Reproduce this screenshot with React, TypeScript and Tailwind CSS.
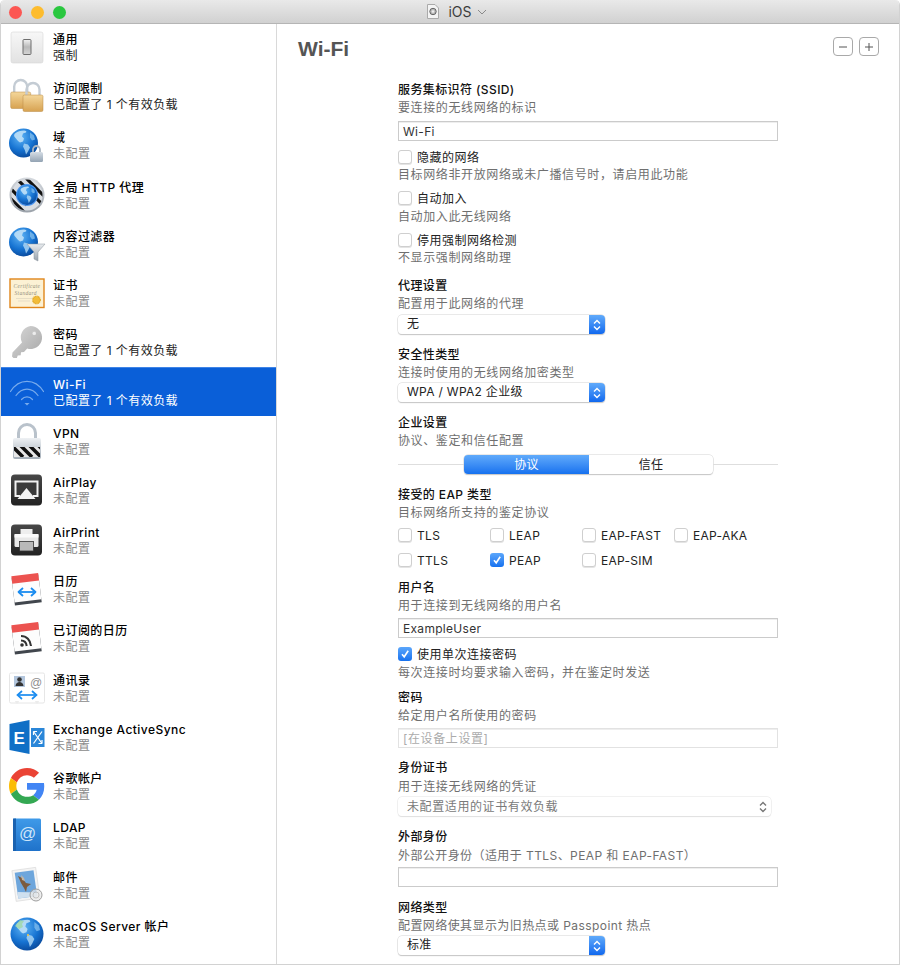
import type { ReactNode } from "react";

function IconBox({ children }: { children: ReactNode }) {
	return (
		<svg width="36" height="36" viewBox="0 0 36 36" className="shrink-0 overflow-visible">
			{children}
		</svg>
	);
}

function GlobeBody({ id, cx, cy, r }: { id: string; cx: number; cy: number; r: number }) {
	const s = r / 14.5;
	return (
		<g transform={`translate(${cx - 14.5 * s} ${cy - 14.5 * s}) scale(${s})`}>
			<defs>
				<radialGradient id={id} cx="0.4" cy="0.3" r="0.8">
					<stop offset="0" stopColor="#5fb4f5" />
					<stop offset="0.55" stopColor="#1673d2" />
					<stop offset="1" stopColor="#063f8e" />
				</radialGradient>
			</defs>
			<circle cx="14.5" cy="14.5" r="14.5" fill={`url(#${id})`} />
			<path
				d="M6 5c2-2 6-3 9-3 2 0 3 1 2 2l-3 1-1 3 2 2-1 3-3 1c-2-1-3-3-4-4S4 7 6 5z"
				fill="#bfe0f7"
				opacity="0.9"
			/>
			<path d="M15 15l4 1 2 3-2 4-2 3-1-4-2-4z" fill="#a8d4f3" opacity="0.85" />
			<path d="M21 4l4 3 1 4-3 1-2-3z" fill="#8cc4ef" opacity="0.7" />
		</g>
	);
}

function GeneralIcon() {
	return (
		<IconBox>
			<defs>
				<linearGradient id="gen" x1="0" y1="0" x2="0" y2="1">
					<stop offset="0" stopColor="#f7f7f7" />
					<stop offset="1" stopColor="#e2e2e2" />
				</linearGradient>
				<linearGradient id="gens" x1="0" y1="0" x2="0" y2="1">
					<stop offset="0" stopColor="#f2f2f2" />
					<stop offset="0.5" stopColor="#b9b9b9" />
					<stop offset="1" stopColor="#d5d5d5" />
				</linearGradient>
			</defs>
			<rect x="2" y="3" width="32" height="31" rx="2" fill="url(#gen)" stroke="#d6d6d6" strokeWidth="0.6" />
			<rect x="14" y="10.5" width="8" height="15" rx="1" fill="url(#gens)" stroke="#6e6e6e" strokeWidth="1" />
		</IconBox>
	);
}

function Padlock({ x, y, id }: { x: number; y: number; id: string }) {
	return (
		<g transform={`translate(${x} ${y})`}>
			<defs>
				<linearGradient id={id} x1="0" y1="0" x2="0" y2="1">
					<stop offset="0" stopColor="#f4d79b" />
					<stop offset="1" stopColor="#d7a251" />
				</linearGradient>
			</defs>
			<path d="M3.500 15V8a6.500 6.500 0 0113 0v7" fill="none" stroke="#c4ccd4" strokeWidth="2.400" />
			<rect x="0" y="13.500" width="20" height="16.500" rx="1.500" fill={`url(#${id})`} stroke="#b88a45" strokeWidth="0.5" />
		</g>
	);
}

function RestrictionIcon() {
	return (
		<IconBox>
			<Padlock x={1.7} y={0.5} id="lock1" />
			<Padlock x={14} y={3.5} id="lock2" />
		</IconBox>
	);
}

function DomainIcon() {
	return (
		<IconBox>
			<GlobeBody id="gl1" cx={14.5} cy={16} r={14.5} />
			<defs>
				<linearGradient id="sl" x1="0" y1="0" x2="0" y2="1">
					<stop offset="0" stopColor="#d5dde5" />
					<stop offset="1" stopColor="#93a3b3" />
				</linearGradient>
			</defs>
			<path d="M24 26v-3.500a3.500 3.500 0 017 0V26" fill="none" stroke="#aab6c2" strokeWidth="1.800" />
			<rect x="21" y="25" width="13" height="10" rx="1.500" fill="url(#sl)" />
		</IconBox>
	);
}

function ProxyIcon() {
	return (
		<IconBox>
			<defs>
				<linearGradient id="pr" x1="0" y1="0" x2="0" y2="1">
					<stop offset="0" stopColor="#d5d9de" />
					<stop offset="1" stopColor="#9aa1a9" />
				</linearGradient>
				<clipPath id="prc">
					<circle cx="18" cy="18" r="15.500" />
				</clipPath>
			</defs>
			<circle cx="18" cy="18" r="17.500" fill="url(#pr)" />
			<circle cx="18" cy="18" r="15.500" fill="#d9dde2" />
			<g clipPath="url(#prc)" stroke="#111" strokeWidth="3.200">
				<path d="M-2 8L18 28" />
				<path d="M-4 16L16 36" />
				<path d="M4 -2L38 32" />
				<path d="M12 -4L42 26" />
			</g>
			<circle cx="18" cy="18" r="11" fill="#4b95f0" />
			<GlobeBody id="gl2" cx={18} cy={18} r={10} />
		</IconBox>
	);
}

function FilterIcon() {
	return (
		<IconBox>
			<GlobeBody id="gl3" cx={14.5} cy={16} r={14.5} />
			<defs>
				<linearGradient id="fn" x1="0" y1="0" x2="0" y2="1">
					<stop offset="0" stopColor="#e8ebee" />
					<stop offset="1" stopColor="#98a2ac" />
				</linearGradient>
			</defs>
			<path d="M18 18h18l-7 8v9l-4-2v-7z" fill="url(#fn)" stroke="#8b949c" strokeWidth="0.5" />
		</IconBox>
	);
}

function CertIcon() {
	return (
		<IconBox>
			<rect x="1" y="4" width="34" height="28.500" fill="#fcf1d4" stroke="#e0861a" strokeWidth="1.400" />
			<text x="4.500" y="13" fontSize="5.500" fontStyle="italic" fontFamily="'Liberation Serif', serif" fill="#97917e">
				Certificate
			</text>
			<text x="5.500" y="19.500" fontSize="5.500" fontStyle="italic" fontFamily="'Liberation Serif', serif" fill="#97917e">
				Standard
			</text>
			<path d="M7 23.500h16M9 26h12" stroke="#d9d2bc" strokeWidth="0.6" />
			<circle cx="27.500" cy="25" r="3.800" fill="#f2bc38" stroke="#e0a420" strokeWidth="1.200" strokeDasharray="1 0.6" />
		</IconBox>
	);
}

function KeyIcon() {
	return (
		<IconBox>
			<defs>
				<linearGradient id="ky" x1="0" y1="0" x2="1" y2="1">
					<stop offset="0" stopColor="#d9d9d9" />
					<stop offset="1" stopColor="#a6a6a6" />
				</linearGradient>
			</defs>
			<path
				d="M21.500 2a11.500 11.500 0 11-3.300 22.500L15 28l-3 .2-.3 3-3 .3-.8 2.500H4.500L3 32.500l.5-4L13 18.500A11.500 11.500 0 0121.500 2z"
				fill="url(#ky)"
			/>
			<circle cx="25" cy="9" r="2.200" fill="#c9c9c9" />
			<circle cx="25.300" cy="9.400" r="1.700" fill="#ededed" />
		</IconBox>
	);
}

function WifiIcon() {
	return (
		<IconBox>
			<g fill="none" stroke="#78abec" strokeWidth="1.200" strokeLinecap="round">
				<path d="M1.500 17.500C10 4 26 4 34.500 17.500" />
				<path d="M7 21.500C13 13 23 13 29 21.500" />
				<path d="M12.500 25.500C15.500 22 20.500 22 23.500 25.500" />
			</g>
			<path d="M15.500 29h5L18 31.500z" fill="#78abec" />
		</IconBox>
	);
}

function VpnIcon() {
	return (
		<IconBox>
			<defs>
				<linearGradient id="vp" x1="0" y1="0" x2="0" y2="1">
					<stop offset="0" stopColor="#eef1f4" />
					<stop offset="1" stopColor="#a3adb7" />
				</linearGradient>
				<clipPath id="vpc">
					<rect x="5" y="24" width="26" height="10" />
				</clipPath>
			</defs>
			<path d="M9.500 16V10a8.500 8.500 0 0117 0v6" fill="none" stroke="#b9c2cb" strokeWidth="3" />
			<rect x="4" y="15" width="28" height="21" rx="2" fill="url(#vp)" />
			<rect x="5" y="24" width="26" height="10" fill="#e8e8e8" />
			<g clipPath="url(#vpc)" stroke="#111" strokeWidth="3.500">
				<path d="M2 22l12 12" />
				<path d="M11 22l12 12" />
				<path d="M20 22l12 12" />
				<path d="M29 22l12 12" />
			</g>
		</IconBox>
	);
}

function DarkTile({ id, children }: { id: string; children: ReactNode }) {
	return (
		<IconBox>
			<defs>
				<linearGradient id={id} x1="0" y1="0" x2="0" y2="1">
					<stop offset="0" stopColor="#474747" />
					<stop offset="1" stopColor="#222" />
				</linearGradient>
			</defs>
			<rect x="2" y="2.500" width="31" height="31" rx="4" fill={`url(#${id})`} />
			{children}
		</IconBox>
	);
}

function AirPlayIcon() {
	return (
		<DarkTile id="apl">
			<path d="M11 24H6.500V9.500h22V24H24" fill="#3a3a3a" stroke="#f2f2f2" strokeWidth="2" />
			<path d="M17.500 16l9 11h-18z" fill="#f2f2f2" />
		</DarkTile>
	);
}

function AirPrintIcon() {
	return (
		<DarkTile id="apr">
			<rect x="11.500" y="7" width="12" height="6" fill="#eee" />
			<rect x="5.500" y="12" width="24" height="13" rx="1.500" fill="#e8e8e8" />
			<rect x="5.500" y="12" width="24" height="3.500" fill="#fafafa" />
			<rect x="10.500" y="19.500" width="14" height="9.500" fill="#b9b9b9" stroke="#333" strokeWidth="0.8" />
		</DarkTile>
	);
}

function CalendarBase({ children }: { children: ReactNode }) {
	return (
		<IconBox>
			<g transform="rotate(-7 18 18)">
				<rect x="4" y="5" width="27" height="28" fill="#41464d" />
				<rect x="4" y="4" width="27" height="26" fill="#fdfdfd" />
				<rect x="4" y="3.500" width="27" height="7.500" fill="#ec5350" />
			</g>
			{children}
		</IconBox>
	);
}

function CalendarIcon() {
	return (
		<CalendarBase>
			<g fill="none" stroke="#1a8cf0" strokeWidth="1.800" strokeLinejoin="round">
				<path d="M10 21h16" />
				<path d="M14 17l-4.500 4 4.500 4" />
				<path d="M22 17l4.500 4-4.500 4" />
			</g>
		</CalendarBase>
	);
}

function SubscribedIcon() {
	return (
		<CalendarBase>
			<g fill="none" stroke="#333" strokeWidth="2.100">
				<path d="M12 16c5.500 0 9.500 4 10 10" />
				<path d="M12 20.500c3 0 5.300 2.200 5.700 5.500" />
			</g>
			<circle cx="13" cy="25" r="1.800" fill="#333" />
		</CalendarBase>
	);
}

function ContactsIcon() {
	return (
		<IconBox>
			<rect x="0.500" y="3" width="35" height="30" rx="1.500" fill="#fff" stroke="#e6e6e6" />
			<rect x="5" y="6" width="11" height="11" fill="#b3c6dd" />
			<circle cx="10.500" cy="9.500" r="2.300" fill="#333" />
			<path d="M6.500 16c.5-3 2-4 4-4s3.500 1 4 4z" fill="#333" />
			<text x="21" y="16.500" fontSize="12" fontFamily="'Liberation Sans', sans-serif" fill="#8f8f8f">
				@
			</text>
			<g fill="none" stroke="#1a8cf0" strokeWidth="1.700">
				<path d="M9 25h18" />
				<path d="M13 21l-4.500 4 4.500 4" />
				<path d="M23 21l4.500 4-4.500 4" />
			</g>
			<path d="M6 31h4l-1 2.500H7zM26 31h4l-1 2.500h-2z" fill="#ececec" />
		</IconBox>
	);
}

function ExchangeIcon() {
	return (
		<IconBox>
			<path d="M0.500 5L20.500 1v34l-20-4z" fill="#0f6fc6" />
			<rect x="22" y="9" width="13.500" height="19" fill="#2a86d8" />
			<text x="4.500" y="24.500" fontSize="17" fontWeight="700" fontFamily="'Liberation Sans', sans-serif" fill="#fff">
				E
			</text>
			<g fill="none" stroke="#fff" strokeWidth="1.200">
				<path d="M24.500 12.500l8.500 12" />
				<path d="M33 12.500l-8.500 12" />
				<path d="M24.500 12.500h3.500M24.500 12.500V16M33 24.500h-3.500M33 24.500V21" />
			</g>
		</IconBox>
	);
}

function GoogleIcon() {
	return (
		<svg width="36" height="36" viewBox="0 0 48 48" className="shrink-0">
			<path fill="#EA4335" d="M24 9.500c3.540 0 6.710 1.220 9.210 3.600l6.850-6.850C35.900 2.380 30.470 0 24 0 14.620 0 6.510 5.380 2.560 13.220l7.980 6.190C12.430 13.720 17.740 9.500 24 9.500z" />
			<path fill="#4285F4" d="M46.980 24.550c0-1.570-.15-3.090-.38-4.550H24v9.020h12.940c-.58 2.960-2.260 5.480-4.780 7.180l7.730 6c4.510-4.180 7.090-10.360 7.090-17.650z" />
			<path fill="#FBBC05" d="M10.530 28.590c-.48-1.450-.76-2.990-.76-4.590s.27-3.140.76-4.590l-7.980-6.190C.92 16.460 0 20.120 0 24c0 3.880.92 7.540 2.560 10.780l7.970-6.190z" />
			<path fill="#34A853" d="M24 48c6.480 0 11.930-2.130 15.890-5.810l-7.730-6c-2.150 1.450-4.920 2.300-8.160 2.300-6.260 0-11.570-4.220-13.470-9.910l-7.980 6.190C6.510 42.620 14.620 48 24 48z" />
		</svg>
	);
}

function LdapIcon() {
	return (
		<IconBox>
			<defs>
				<linearGradient id="ld" x1="0" y1="0" x2="0" y2="1">
					<stop offset="0" stopColor="#3f9ae9" />
					<stop offset="1" stopColor="#1f72ca" />
				</linearGradient>
			</defs>
			<rect x="4" y="1.500" width="28" height="32.500" rx="1.500" fill="url(#ld)" />
			<rect x="4" y="1.500" width="3" height="32.500" fill="#1a62b0" />
			<text x="10" y="22" fontSize="17" fontFamily="'Liberation Sans', sans-serif" fill="#cfe6fa">
				@
			</text>
		</IconBox>
	);
}

function MailIcon() {
	return (
		<IconBox>
			<g transform="rotate(-8 16 18)">
				<rect x="5" y="2" width="24" height="31" fill="#f4f4f4" stroke="#cfcfcf" strokeWidth="0.5" />
				<rect x="7.500" y="4.500" width="19" height="26" fill="#6ea6dc" />
				<path d="M7.500 24l19 3v3.500h-19z" fill="#cfe0ef" />
			</g>
			<path d="M9 9l4 2 4 5 5 1-4 3-1 5-2-4-3-5z" fill="#7c5a3c" />
			<path d="M12 8l3 3 1 3-3-1z" fill="#c5b5a2" />
			<circle cx="27" cy="28" r="6" fill="#e8e8e8" fillOpacity="0.7" stroke="#9e9e9e" strokeWidth="1" />
			<circle cx="27" cy="28" r="3" fill="none" stroke="#a8a8a8" strokeWidth="0.6" />
		</IconBox>
	);
}

function ServerGlobeIcon() {
	return (
		<IconBox>
			<GlobeBody id="gl4" cx={18} cy={18} r={16.500} />
			<path d="M6 10l5-6 4 1-2 3 1 3-4 2z" fill="#9fd8a8" opacity="0.8" />
			<circle cx="19" cy="19" r="1" fill="#f5c33b" />
		</IconBox>
	);
}

const sidebarItems = [
	{ name: "通用", status: "强制", on: true, icon: <GeneralIcon /> },
	{ name: "访问限制", status: "已配置了 1 个有效负载", on: true, icon: <RestrictionIcon /> },
	{ name: "域", status: "未配置", icon: <DomainIcon /> },
	{ name: "全局 HTTP 代理", status: "未配置", icon: <ProxyIcon /> },
	{ name: "内容过滤器", status: "未配置", icon: <FilterIcon /> },
	{ name: "证书", status: "未配置", icon: <CertIcon /> },
	{ name: "密码", status: "已配置了 1 个有效负载", on: true, icon: <KeyIcon /> },
	{ name: "Wi-Fi", status: "已配置了 1 个有效负载", selected: true, icon: <WifiIcon /> },
	{ name: "VPN", status: "未配置", icon: <VpnIcon /> },
	{ name: "AirPlay", status: "未配置", icon: <AirPlayIcon /> },
	{ name: "AirPrint", status: "未配置", icon: <AirPrintIcon /> },
	{ name: "日历", status: "未配置", icon: <CalendarIcon /> },
	{ name: "已订阅的日历", status: "未配置", icon: <SubscribedIcon /> },
	{ name: "通讯录", status: "未配置", icon: <ContactsIcon /> },
	{ name: "Exchange ActiveSync", status: "未配置", icon: <ExchangeIcon /> },
	{ name: "谷歌帐户", status: "未配置", icon: <GoogleIcon /> },
	{ name: "LDAP", status: "未配置", icon: <LdapIcon /> },
	{ name: "邮件", status: "未配置", icon: <MailIcon /> },
	{ name: "macOS Server 帐户", status: "未配置", icon: <ServerGlobeIcon /> },
];

function SidebarRow({ item }: { item: (typeof sidebarItems)[number] }) {
	const statusColor = item.selected ? "text-white" : item.on ? "text-[#222]" : "text-[#8a8a8a]";
	return (
		<div
			className={
				"flex h-[49.3px] shrink-0 items-center gap-2 pl-2 " +
				(item.selected ? "bg-[#0a5fd8] border-t border-[#3f84e6]" : "")
			}
		>
			{item.icon}
			<div className="pt-[2px] leading-[16px] tracking-[0.45px]">
				<div className={"font-medium " + (item.selected ? "text-white" : "text-black")}>{item.name}</div>
				<div className={statusColor}>{item.status}</div>
			</div>
		</div>
	);
}

function Label({ children, className = "" }: { children: ReactNode; className?: string }) {
	return <div className={"h-[18px] leading-[20px] font-medium tracking-[0.4px] text-[#111] " + className}>{children}</div>;
}

function Desc({ children, className = "" }: { children: ReactNode; className?: string }) {
	return <div className={"h-[18px] leading-[20px] text-[#6f6f6f] " + (className || "tracking-[0.62px]")}>{children}</div>;
}

function TextBox({ value, className = "", disabled }: { value?: string; className?: string; disabled?: boolean }) {
	return (
		<div
			className={
				"h-5 border px-1 leading-[19px] shadow-[inset_0_1px_0_#eee] " +
				(disabled ? "border-[#e2e2e2] text-[#ababab] tracking-[0.6px] " : "border-[#cbcbcb] text-[#333] ") +
				className
			}
		>
			{value}
		</div>
	);
}

function Stepper({ dim }: { dim?: boolean }) {
	return (
		<svg width="10" height="14" viewBox="0 0 10 14" fill="none" stroke={dim ? "#777" : "#fff"} strokeWidth="1.400">
			<path d="M2 5.500L5 2.500l3 3" />
			<path d="M2 8.500l3 3 3-3" />
		</svg>
	);
}

function Select({ value, className = "" }: { value: string; className?: string }) {
	return (
		<div className={"flex h-[19px] w-[207px] overflow-hidden rounded-[4px] bg-white shadow-[0_0_0_0.5px_#d4d4d4,0_1px_1px_#bbb] " + className}>
			<div className="flex-1 pl-[9px] leading-[18px] text-[#222]">{value}</div>
			<div className="flex w-4 items-center justify-center bg-gradient-to-b from-[#60aafa] to-[#0f68ee]">
				<Stepper />
			</div>
		</div>
	);
}

function CheckMark({ checked }: { checked?: boolean }) {
	if (checked) {
		return (
			<span className="flex h-[14px] w-[14px] shrink-0 items-center justify-center rounded-[3px] bg-gradient-to-b from-[#5aa6fb] to-[#1571ef]">
				<svg width="10" height="10" viewBox="0 0 10 10" fill="none" stroke="#fff" strokeWidth="1.600">
					<path d="M2 5.200l2.200 2.600L8.200 1.800" />
				</svg>
			</span>
		);
	}
	return <span className="h-[14px] w-[14px] shrink-0 rounded-[3px] border border-[#cfcfcf] bg-white shadow-[0_1px_0_#e4e4e4]" />;
}

function CheckRow({ label, checked, className = "" }: { label: string; checked?: boolean; className?: string }) {
	return (
		<div className={"flex h-[18px] items-center gap-[5px] leading-[18px] text-[#222] " + className}>
			<CheckMark checked={checked} />
			<span className="mt-[2px]">{label}</span>
		</div>
	);
}

const eapRows = [
	[{ l: "TLS" }, { l: "LEAP" }, { l: "EAP-FAST" }, { l: "EAP-AKA" }],
	[{ l: "TTLS" }, { l: "PEAP", c: true }, { l: "EAP-SIM" }],
];

export default function App() {
	return (
		<div className="flex h-[965px] w-[900px] flex-col overflow-hidden rounded-t-[5px] border-x border-b border-[#d2d2d2] bg-white font-['Inter','Noto_Sans_CJK_SC',sans-serif] text-[12px] tracking-[0.3px]">
			{/* title bar */}
			<div className="relative z-10 flex h-6 shrink-0 items-center justify-center border-b border-[#b5b5b5] bg-gradient-to-b from-[#e9e9e9] to-[#d1d1d1]">
				<div className="absolute left-[8px] top-[6px] flex gap-[9px]">
					<span className="h-[13px] w-[13px] rounded-full bg-[#fc5753]" />
					<span className="h-[13px] w-[13px] rounded-full bg-[#fdbc2e]" />
					<span className="h-[13px] w-[13px] rounded-full bg-[#2ac73f]" />
				</div>
				<div className="flex items-center gap-[5px] pl-[14px] text-[14px] tracking-normal text-[#3c3c3c]">
					<svg width="12" height="15" viewBox="0 0 12 15" className="mr-[4px]">
						<path d="M0.500 0.500H8l3.500 3.500v10.500H.5z" fill="#f4f4f4" stroke="#aaa" />
						<circle cx="6" cy="7.500" r="3.200" fill="#bbb" stroke="#666" />
						<circle cx="6" cy="7.500" r="1.200" fill="#eee" />
					</svg>
					iOS
					<svg width="10" height="6" viewBox="0 0 10 6" fill="none" stroke="#8a8a8a" strokeWidth="1">
						<path d="M1 1l4 4 4-4" />
					</svg>
				</div>
			</div>

			<div className="flex min-h-0 flex-1">
				<aside className="h-full w-[276px] shrink-0 overflow-hidden border-r border-[#d9d9d9]">
					<div className="-mt-[2px] flex flex-col">
						{sidebarItems.map((item) => (
							<SidebarRow key={item.name} item={item} />
						))}
					</div>
				</aside>

				<main className="min-w-0 flex-1 overflow-hidden">
					<div className="flex items-start justify-between pl-[21px] pr-[20px] pt-[10px]">
						<h1 className="font-['Liberation_Sans',sans-serif] text-[21px] leading-[30px] font-bold tracking-normal text-[#555]">Wi-Fi</h1>
						<div className="flex gap-[6px] pt-[3px]">
							<button className="flex h-[19px] w-5 items-center justify-center rounded-[4px] border border-[#a9a9a9] bg-white">
								<svg width="10" height="10" viewBox="0 0 10 10" stroke="#555" strokeWidth="1"><path d="M1 5h8" /></svg>
							</button>
							<button className="flex h-[19px] w-5 items-center justify-center rounded-[4px] border border-[#a9a9a9] bg-white">
								<svg width="10" height="10" viewBox="0 0 10 10" stroke="#555" strokeWidth="1"><path d="M1 5h8M5 1v8" /></svg>
							</button>
						</div>
					</div>

					<div className="ml-[121px] mt-[16px] flex w-[380px] flex-col">
						<Label>服务集标识符 (SSID)</Label>
						<Desc>要连接的无线网络的标识</Desc>
						<TextBox value="Wi-Fi" className="mt-[5px]" />
						<CheckRow label="隐藏的网络" className="mt-[7px] tracking-[0.5px]" />
						<Desc className="-mt-px tracking-[0.62px]">目标网络非开放网络或未广播信号时，请启用此功能</Desc>
						<CheckRow label="自动加入" className="mt-[6px] tracking-[0.5px]" />
						<Desc>自动加入此无线网络</Desc>
						<CheckRow label="停用强制网络检测" className="mt-[6px] tracking-[0.5px]" />
						<Desc className="-mt-px tracking-[0.62px]">不显示强制网络助理</Desc>

						<Label className="mt-[10px]">代理设置</Label>
						<Desc>配置用于此网络的代理</Desc>
						<Select value="无" className="mt-[3px]" />

						<Label className="mt-[11px]">安全性类型</Label>
						<Desc>连接时使用的无线网络加密类型</Desc>
						<Select value="WPA / WPA2 企业级" className="mt-[2px]" />

						<Label className="mt-[11px]">企业设置</Label>
						<Desc>协议、鉴定和信任配置</Desc>
						<div className="mt-[6px] flex items-center">
							<div className="h-px flex-1 bg-[#dedede]" />
							<div className="flex h-[19px] w-[249px] overflow-hidden rounded-[4px] bg-white text-center leading-[19px] shadow-[0_0_0_0.5px_#d4d4d4,0_1px_1px_#bbb]">
								<div className="w-[125px] bg-gradient-to-b from-[#60aafa] to-[#1571ef] text-white">协议</div>
								<div className="flex-1 text-[#222]">信任</div>
							</div>
							<div className="h-px w-[65px] bg-[#dedede]" />
						</div>

						<Label className="mt-[11px]">接受的 EAP 类型</Label>
						<Desc>目标网络所支持的鉴定协议</Desc>
						<div className="mt-[5px] flex flex-col gap-[7px]">
							{eapRows.map((row, i) => (
								<div key={i} className="grid grid-cols-[92px_92px_92px_92px]">
									{row.map((c) => (
										<CheckRow key={c.l} label={c.l} checked={"c" in c} />
									))}
								</div>
							))}
						</div>

						<Label className="mt-[9px]">用户名</Label>
						<Desc>用于连接到无线网络的用户名</Desc>
						<TextBox value="ExampleUser" className="mt-[4px]" />
						<CheckRow label="使用单次连接密码" checked className="mt-[7px] tracking-[0.5px]" />
						<Desc>每次连接时均要求输入密码，并在鉴定时发送</Desc>

						<Label className="mt-[7px]">密码</Label>
						<Desc>给定用户名所使用的密码</Desc>
						<TextBox value="[在设备上设置]" disabled className="mt-[4px]" />

						<Label className="mt-[10px]">身份证书</Label>
						<Desc className="mt-px tracking-[0.62px]">用于连接无线网络的凭证</Desc>
						<div className="mt-[2px] flex h-[19px] w-[373px] items-center justify-between rounded-[4px] bg-white pl-[9px] pr-[3px] leading-[19px] tracking-[0.6px] text-[#7a7a7a] shadow-[0_0_0_0.5px_#e4e4e4,0_1px_1px_#ddd]">
							未配置适用的证书有效负载
							<Stepper dim />
						</div>

						<Label className="mt-[11px]">外部身份</Label>
						<Desc className="mt-px tracking-[0.42px]">外部公开身份（适用于 TTLS、PEAP 和 EAP-FAST）</Desc>
						<TextBox className="mt-[3px]" />

						<Label className="mt-[11px]">网络类型</Label>
						<Desc className="tracking-[0.42px]">配置网络使其显示为旧热点或 Passpoint 热点</Desc>
						<Select value="标准" className="mt-[2px]" />
					</div>
				</main>
			</div>
		</div>
	);
}
